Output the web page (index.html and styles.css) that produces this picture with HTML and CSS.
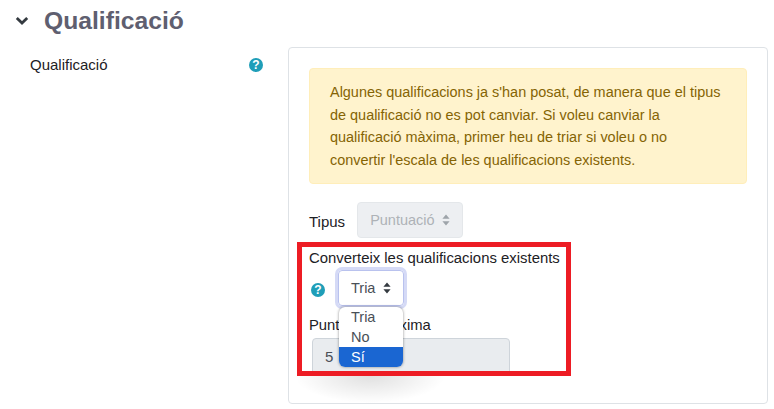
FILE: index.html
```html
<!DOCTYPE html>
<html lang="ca">

<head>
    <meta charset="UTF-8">
    <meta name="viewport" content="width=device-width, initial-scale=1.0">
    <title>Qualificació</title>
    <link rel="stylesheet" href="styles.css">
</head>

<body>
    <h2 class="section-title">
        <svg class="chevron" viewBox="0 0 14 10" width="14" height="10">
            <path d="M1.8 2 L7 7 L12.2 2" fill="none" stroke="#343a40" stroke-width="2.8"></path>
        </svg>
        Qualificació
    </h2>

    <div class="form-row">
        <div class="form-label">
            <span>Qualificació</span>
            <svg class="help" viewBox="0 0 14 14" width="14" height="14">
                <circle cx="7" cy="7" r="7" fill="#1f9eb8"></circle>
                <text x="7" y="11.2" text-anchor="middle" class="help-mark">?</text>
            </svg>
        </div>

        <div class="card">
            <div class="alert">Algunes qualificacions ja s'han posat, de manera que el tipus de qualificació no es pot canviar. Si voleu canviar la qualificació màxima, primer heu de triar si voleu o no convertir l'escala de les qualificacions existents.</div>

            <div class="type-row">
                <span class="type-label">Tipus</span>
                <div class="select select-disabled">
                    Puntuació
                    <svg class="updown" viewBox="0 0 8 12" width="8" height="12">
                        <path d="M4 0.5 L7.6 4.8 H0.4 Z M4 11.5 L7.6 7.2 H0.4 Z" fill="#868e96"></path>
                    </svg>
                </div>
            </div>

            <div class="highlight">
                <div class="convert-label">Converteix les qualificacions existents</div>
                <div class="convert-row">
                    <svg class="help" viewBox="0 0 14 14" width="14" height="14">
                        <circle cx="7" cy="7" r="7" fill="#1f9eb8"></circle>
                        <text x="7" y="11.2" text-anchor="middle" class="help-mark">?</text>
                    </svg>
                    <div class="select select-focus">
                        Tria
                        <svg class="updown" viewBox="0 0 8 12" width="8" height="12">
                            <path d="M4 0.5 L7.6 4.8 H0.4 Z M4 11.5 L7.6 7.2 H0.4 Z" fill="#343a40"></path>
                        </svg>
                    </div>
                </div>
                <div class="max-label">Puntuació màxima</div>
                <div class="max-input">5</div>

                <ul class="dropdown">
                    <li>Tria</li>
                    <li>No</li>
                    <li class="selected">Sí</li>
                </ul>
            </div>
            <div class="smudge"></div>
        </div>
    </div>
</body>

</html>
```

FILE: styles.css
```css
body {
    margin: 0;
    height: 409px;
    overflow: hidden;
    background-color: #fff;
    font-family: "Liberation Sans", Arial, sans-serif;
    font-size: 15px;
    color: #1d2125;
}

.section-title {
    display: flex;
    align-items: center;
    margin: 0;
    padding: 6px 0 0 15px;
    height: 30px;
    font-size: 24.7px;
    font-weight: bold;
    color: #5f5f70;
}

.chevron {
    margin-right: 15px;
}

.form-row {
    display: flex;
    align-items: flex-start;
    margin-top: 11px;
    padding-left: 30px;
}

.form-label {
    display: flex;
    justify-content: space-between;
    width: 233px;
    margin-right: 25px;
    padding-top: 9px;
}

.form-label .help {
    margin-top: 2px;
}

.help-mark {
    font-family: "Liberation Sans", Arial, sans-serif;
    font-size: 12px;
    font-weight: bold;
    fill: #fff;
}

.card {
    position: relative;
    box-sizing: border-box;
    width: 480px;
    height: 357px;
    padding: 20px;
    border: 1px solid #dee2e6;
    border-radius: 4px;
}

.alert {
    box-sizing: border-box;
    width: 438px;
    height: 116px;
    padding: 12px 20px;
    background-color: #fff3cd;
    border: 1px solid #ffeeba;
    border-radius: 4px;
    font-size: 14.45px;
    line-height: 22.5px;
    color: #856404;
}

.type-row {
    display: flex;
    align-items: flex-end;
    margin-top: 18px;
}

.type-label {
    margin-right: 12px;
    padding-bottom: 8px;
}

.select {
    display: flex;
    align-items: center;
    box-sizing: border-box;
    height: 36px;
    padding: 0 12px;
    border: 1px solid #dee2e6;
    border-radius: 4px;
    font-size: 14.5px;
}

.select-disabled {
    width: 106px;
    background-color: #e9ecef;
    color: #9a9fa6;
    opacity: 0.8;
}

.select-focus {
    width: 66px;
    border-color: #b9c2ee;
    box-shadow: 0 0 0 3px #d5daf6;
    color: #495057;
}

.updown {
    margin-left: auto;
}

.highlight {
    position: relative;
    box-sizing: border-box;
    width: 274px;
    height: 134px;
    margin: 4px 0 0 -12px;
    padding: 3px 7px 0;
    border: 5px solid #ed1c24;
    /* the box clips the field, the open list sits on top of it */
    overflow: hidden;
}

.convert-label {
    font-size: 14.9px;
    white-space: nowrap;
}

.convert-row {
    display: flex;
    align-items: center;
    margin-top: 4px;
    padding-left: 2px;
}

.convert-row .help {
    margin-right: 13px;
    margin-top: 3px;
}

.max-label {
    margin-top: 11px;
    font-size: 14.8px;
}

.max-input {
    box-sizing: border-box;
    width: 198px;
    height: 45px;
    margin: 5px 0 0 3px;
    padding: 9px 12px;
    background-color: #e9ecef;
    border: 1px solid #ced4da;
    border-radius: 4px;
    color: #495057;
}

.dropdown {
    position: absolute;
    top: 60px;
    left: 37px;
    width: 64px;
    margin: 0;
    padding: 0;
    list-style: none;
    overflow: hidden;
    background-color: #fff;
    border-radius: 6px;
    box-shadow: 0 0 3px rgba(0, 0, 0, 0.45);
    font-size: 14.5px;
    color: #495057;
}

.dropdown li {
    height: 20px;
    line-height: 20px;
    padding-left: 12px;
}

.dropdown .selected {
    background-color: #1a66d2;
    color: #fff;
}

.smudge {
    position: absolute;
    left: 6px;
    top: 328px;
    width: 150px;
    height: 27px;
    background: radial-gradient(ellipse 50% 100% at 50% 0, rgba(0, 0, 0, 0.12), rgba(0, 0, 0, 0));
}
```
